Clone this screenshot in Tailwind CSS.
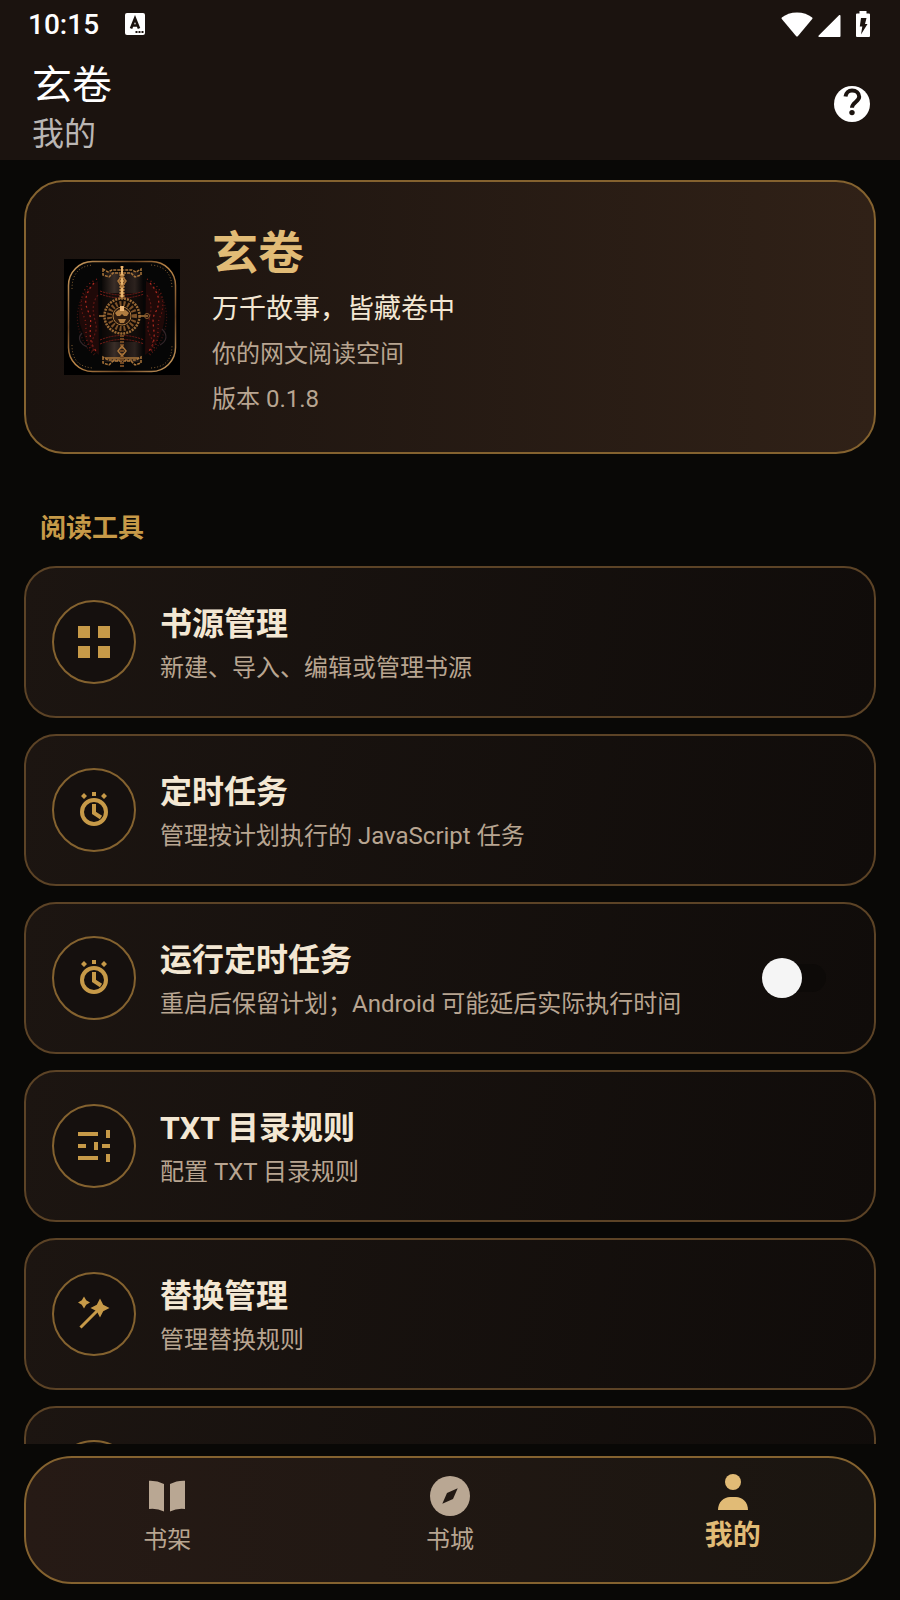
<!DOCTYPE html>
<html lang="zh-CN">
	<head>
		<meta charset="UTF-8" />
		<meta name="viewport" content="width=device-width, initial-scale=1" />
		<title>玄卷 - 我的</title>
		<script src="https://cdn.jsdelivr.net/npm/@tailwindcss/browser@4"></script>
	</head>
	<body
		class="flex h-screen flex-col bg-[#090806] font-['Roboto','Noto_Sans_CJK_SC',sans-serif] text-[#f3e7d3]"
	>
		<!-- Status bar + title -->
		<header class="shrink-0 bg-[#1b130f] text-white">
			<div class="flex h-12 items-center justify-between pr-[30px] pl-7">
				<div class="flex items-center gap-[26px]">
					<time class="pt-0.5 text-[28px] leading-8 font-medium">10:15</time>
					<svg width="20" height="22" viewBox="0 0 20 22">
						<rect width="20" height="22" rx="2" fill="#fff" />
						<path
							d="M6 15.500 10 5.500l4 10M7 12.500h6"
							fill="none"
							stroke="#1b130f"
							stroke-width="2.600"
						/>
						<path d="M10.500 18h2v2h-2zM13.500 18h2v2h-2zM16.500 18h2v2h-2z" fill="#1b130f" />
					</svg>
				</div>
				<div class="flex items-end">
					<svg width="32" height="26" viewBox="0 0 32 26" class="mr-[5px]">
						<path
							d="M16 1.500C10 1.500 4.800 3.400.800 6.500c-.5.5-.5 1 0 1.600L15 25c.6.7 1.400.7 2 0L31.200 8.100c.5-.6.5-1.100 0-1.600C27.200 3.400 22 1.500 16 1.500Z"
							fill="#fff"
						/>
					</svg>
					<svg width="23" height="26" viewBox="0 0 23 26" class="mr-[15px]">
						<path
							d="M21 4.300c.6-.6 1.500-.4 1.500.5V25c0 .6-.4 1-1 1H1.300c-1 0-1.300-.9-.6-1.500Z"
							fill="#fff"
						/>
					</svg>
					<svg width="14" height="26" viewBox="0 0 14 26">
						<path
							d="M3.500 0h7v2.500H13a1 1 0 0 1 1 1V25a1 1 0 0 1-1 1H1a1 1 0 0 1-1-1V3.500a1 1 0 0 1 1-1h2.500Z"
							fill="#fff"
						/>
						<path d="M5 7h5.500L9 13h2.500L5 23.500l1.300-8H3.800Z" fill="#1b130f" />
					</svg>
				</div>
			</div>
			<div class="flex h-28 items-center justify-between pr-[30px] pl-8">
				<div class="flex flex-col pt-3">
					<h1 class="text-[40px] leading-12">玄卷</h1>
					<p class="text-[32px] leading-12 text-[#bab6b4]">我的</p>
				</div>
				<button type="button" aria-label="帮助">
					<svg width="36" height="36" viewBox="0 0 36 36">
						<circle cx="18" cy="18" r="18" fill="#fff" />
						<path
							d="M11.500 10.500C12 7 14.500 4.500 18 4.500c4 0 7.200 2.600 7.200 6.300 0 4.700-7.200 5.700-7.200 10.900"
							fill="none"
							stroke="#1b130f"
							stroke-width="4"
						/>
						<circle cx="18" cy="26.600" r="2.700" fill="#1b130f" />
					</svg>
				</button>
			</div>
		</header>

		<main class="min-h-0 flex-1 overflow-y-auto px-6 pt-5 [scrollbar-width:none]">
			<!-- App card -->
			<section
				class="flex items-center gap-8 rounded-[40px] border-2 border-[#84622f] bg-linear-to-r from-[#1b130f] to-[#302117] px-[38px] py-[35px]"
			>
				<svg width="116" height="116" viewBox="0 0 116 116" class="shrink-0">
					<defs>
						<linearGradient id="rim" x1="0" y1="0" x2="1" y2="1">
							<stop offset="0" stop-color="#d9a866" />
							<stop offset=".3" stop-color="#6b4524" />
							<stop offset=".5" stop-color="#c08a4a" />
							<stop offset=".75" stop-color="#6b4524" />
							<stop offset="1" stop-color="#d9a866" />
						</linearGradient>
						<linearGradient id="scroll">
							<stop offset="0" stop-color="#0b0807" />
							<stop offset=".3" stop-color="#3a2e28" />
							<stop offset=".55" stop-color="#1a1311" />
							<stop offset=".8" stop-color="#2c221e" />
							<stop offset="1" stop-color="#080606" />
						</linearGradient>
					</defs>
					<rect width="116" height="116" fill="#000" />
					<rect x="4.500" y="2.500" width="107" height="110" rx="24" fill="#060606" stroke="url(#rim)" stroke-width="1.500" />
					<g fill="none" stroke="#7d5a30" stroke-dasharray="1 2">
						<path d="M8 30C8 15 15 7 29 6M87 6c14 1 21 9 21 24M8 86c0 15 7 22 21 23M87 109c14-1 21-8 21-23" />
					</g>
					<!-- red smoke -->
					<path d="M34 22C16 32 12 52 17 68s10 22 18 28zM82 22c18 10 22 30 17 46s-10 22-18 28z" fill="#5a120e" fill-opacity=".3" />
					<g fill="none" stroke-width="1.200">
						<path d="M33 20C15 28 15 48 20 58s-3 24 11 37" stroke="#8c1f18" stroke-dasharray="1 3" />
						<path d="M30 24C20 36 20 44 25 54s-4 24 7 38" stroke="#b02a20" stroke-dasharray="2 3" />
						<path d="M26 28C12 42 12 60 15 70s6 18 15 26" stroke="#4a1512" stroke-dasharray="1 2" />
						<path d="M34 36C26 46 30 56 32 66s-8 14-2 26" stroke="#5e1714" stroke-dasharray="2 2" />
						<path d="M83 20c18 8 18 28 13 38s3 24-11 37" stroke="#8c1f18" stroke-dasharray="1 3" />
						<path d="M86 24c10 12 11 20 5 30s5 24-6 38" stroke="#b02a20" stroke-dasharray="2 3" />
						<path d="M90 28c14 14 14 32 11 42s-6 18-15 26" stroke="#4a1512" stroke-dasharray="1 2" />
						<path d="M83 36c7 10 3 20 1 30s9 14 3 26" stroke="#5e1714" stroke-dasharray="2 2" />
						<path d="M98 70c6 6 5 12-2 16M18 74c-6 6 0 12 5 14" stroke="#33262a" />
					</g>
					<!-- scroll -->
					<path d="M38 13h41v90H38z" fill="url(#scroll)" />
					<path d="M38 34h41v49H38z" fill="#0b0706" fill-opacity=".75" />
					<g fill="none" stroke="#7a1c17" stroke-dasharray="2 1">
						<path d="M36 32q22 8 44 0M36 35q22 8 44 0M36 85q22-9 44 0M36 81q22-9 44 0" />
					</g>
					<g fill="none" stroke="#a8743a" stroke-width="1.500">
						<path d="M39 10v6l6 2 4-4h18l4 4 6-2v-6l-5 3-4-2H48l-4 2zM39 98v6l6 2 4-4h18l4 4 6-2v-6l-5 3h-28z" stroke-dasharray="3 1" />
						<path d="M41 99h34" />
						<path d="M58 7v101" stroke="#6e4521" stroke-width="4" stroke-dasharray="2 1" />
						<path d="M58 15v34" stroke="#c08a4a" stroke-width="5" stroke-dasharray="2 1" />
						<path d="M58 7v40" stroke="#e8b670" stroke-width="2" />
						<path d="M54 22l4-5 4 5-4 6zM54 92l4-5 4 5-4 5z" />
					</g>
					<circle cx="58" cy="57" r="17.500" fill="#120b07" stroke="#9a6a35" stroke-width="2.500" stroke-dasharray="2 1" />
					<circle cx="58" cy="57" r="12.500" fill="none" stroke="#7e5228" stroke-width="5" stroke-dasharray="2 2" />
					<circle cx="58" cy="57" r="9" fill="#2d1a0e" stroke="#b07c40" />
					<path d="M51 54q7-8 14 0l-2 3h-3l-2-2-2 2h-3zM54 60h8l-2 4h-4z" fill="#b07c40" />
					<path d="M56 47h4v5h-4z" fill="#f0b978" />
					<path d="M35 57h5M76 57h8" stroke="#a8743a" stroke-width="1.500" />
					<circle cx="83" cy="57" r="2.500" fill="none" stroke="#8a5c2c" />
				</svg>
				<div class="flex flex-col">
					<h2 class="text-[46px] leading-18 font-bold text-[#e1bb76]">玄卷</h2>
					<p class="mt-0.5 text-[27px] leading-9">万千故事，皆藏卷中</p>
					<p class="mt-[9px] text-2xl leading-9 text-[#b8a591]">你的网文阅读空间</p>
					<p class="mt-[9px] text-2xl leading-9 text-[#b8a591]">版本 0.1.8</p>
				</div>
			</section>

			<h2 class="mt-14 mb-5 px-4 text-[26px] leading-9 font-bold text-[#c79a48]">
				阅读工具
			</h2>

			<!-- Tools -->
			<ul class="flex flex-col gap-4">
				<li>
					<a
						href="#sources"
						class="flex h-38 items-center gap-6 rounded-4xl border-2 border-[#5c4326] bg-linear-[100deg] from-[#1c1511] to-[#100c0a] px-[26px]"
					>
						<span class="flex size-21 shrink-0 items-center justify-center rounded-full border-2 border-[#84622f] bg-[#15100e]">
							<svg width="32" height="32" viewBox="0 0 32 32">
								<path fill="#c79a48" d="M0 0h12v12H0zM20 0h12v12H20zM0 20h12v12H0zM20 20h12v12H20z" />
							</svg>
						</span>
						<span class="flex flex-col pt-1">
							<span class="text-[32px] leading-12 font-bold">书源管理</span>
							<span class="text-2xl leading-10 text-[#b8a591]">新建、导入、编辑或管理书源</span>
						</span>
					</a>
				</li>
				<li>
					<a
						href="#tasks"
						class="flex h-38 items-center gap-6 rounded-4xl border-2 border-[#5c4326] bg-linear-[100deg] from-[#1c1511] to-[#100c0a] px-[26px]"
					>
						<span class="flex size-21 shrink-0 items-center justify-center rounded-full border-2 border-[#84622f] bg-[#15100e]">
							<svg width="32" height="36" viewBox="0 0 32 36">
								<circle cx="16" cy="20" r="12" fill="none" stroke="#c79a48" stroke-width="4" />
								<path fill="none" stroke="#c79a48" stroke-width="4" d="M16 12v9l7 4.500" />
								<path fill="#c79a48" d="M14 0h4v4h-4zM6 1 9 4 6 7 3 4zM26 1l3 3-3 3-3-3z" />
							</svg>
						</span>
						<span class="flex flex-col pt-1">
							<span class="text-[32px] leading-12 font-bold">定时任务</span>
							<span class="text-2xl leading-10 text-[#b8a591]">管理按计划执行的 JavaScript 任务</span>
						</span>
					</a>
				</li>
				<li>
					<label
						for="run-tasks"
						class="flex h-38 items-center gap-6 rounded-4xl border-2 border-[#5c4326] bg-linear-[100deg] from-[#1c1511] to-[#100c0a] pr-12 pl-[26px]"
					>
						<span class="flex size-21 shrink-0 items-center justify-center rounded-full border-2 border-[#84622f] bg-[#15100e]">
							<svg width="32" height="36" viewBox="0 0 32 36">
								<circle cx="16" cy="20" r="12" fill="none" stroke="#c79a48" stroke-width="4" />
								<path fill="none" stroke="#c79a48" stroke-width="4" d="M16 12v9l7 4.500" />
								<path fill="#c79a48" d="M14 0h4v4h-4zM6 1 9 4 6 7 3 4zM26 1l3 3-3 3-3-3z" />
							</svg>
						</span>
						<span class="flex flex-1 flex-col pt-1">
							<span class="text-[32px] leading-12 font-bold">运行定时任务</span>
							<span class="text-2xl leading-10 text-[#b8a591]">重启后保留计划；Android 可能延后实际执行时间</span>
						</span>
						<input
							id="run-tasks"
							type="checkbox"
							class="flex h-7 w-16 shrink-0 appearance-none items-center rounded-full bg-[#0d0a08] before:size-10 before:shrink-0 before:rounded-full before:bg-[#f5f5f5] checked:justify-end checked:bg-[#84622f]"
						/>
					</label>
				</li>
				<li>
					<a
						href="#txt-rules"
						class="flex h-38 items-center gap-6 rounded-4xl border-2 border-[#5c4326] bg-linear-[100deg] from-[#1c1511] to-[#100c0a] px-[26px]"
					>
						<span class="flex size-21 shrink-0 items-center justify-center rounded-full border-2 border-[#84622f] bg-[#15100e]">
							<svg width="32" height="32" viewBox="0 0 32 32">
								<path
									fill="#c79a48"
									d="M0 2h20v4H0zM28 0h4v8h-4zM0 14h8v4H0zM16 12h4v8h-4zM24 14h8v4h-8zM0 26h20v4H0zM28 24h4v8h-4z"
								/>
							</svg>
						</span>
						<span class="flex flex-col pt-1">
							<span class="text-[32px] leading-12 font-bold">TXT 目录规则</span>
							<span class="text-2xl leading-10 text-[#b8a591]">配置 TXT 目录规则</span>
						</span>
					</a>
				</li>
				<li>
					<a
						href="#replace"
						class="flex h-38 items-center gap-6 rounded-4xl border-2 border-[#5c4326] bg-linear-[100deg] from-[#1c1511] to-[#100c0a] px-[26px]"
					>
						<span class="flex size-21 shrink-0 items-center justify-center rounded-full border-2 border-[#84622f] bg-[#15100e]">
							<svg width="32" height="32" viewBox="0 0 32 32" class="overflow-visible">
								<path
									fill="#c79a48"
									d="m6-1.500 2.200 3.800L12 4.500 8.200 6.700 6 10.500 3.800 6.700 0 4.500l3.800-2.200ZM22 .500l3.200 6.300L31.500 10l-6.300 3.200L22 19.500l-3.200-6.300L12.500 10l6.300-3.200Z"
								/>
								<path stroke="#c79a48" stroke-width="3" d="M2.500 29.500 21 11" />
							</svg>
						</span>
						<span class="flex flex-col pt-1">
							<span class="text-[32px] leading-12 font-bold">替换管理</span>
							<span class="text-2xl leading-10 text-[#b8a591]">管理替换规则</span>
						</span>
					</a>
				</li>
				<li
					class="flex h-38 items-center rounded-4xl border-2 border-[#5c4326] bg-linear-[100deg] from-[#1c1511] to-[#100c0a] px-[26px]"
				>
					<span class="size-21 rounded-full border-2 border-[#84622f] bg-[#15100e]"></span>
				</li>
			</ul>
		</main>

		<!-- Bottom tabs -->
		<nav
			class="mx-6 mt-3 mb-4 grid h-32 shrink-0 grid-cols-3 rounded-[48px] border-2 border-[#84622f] bg-linear-to-r from-[#261a15] to-[#1a1510] text-2xl text-[#b8a591]"
		>
			<a href="#shelf" class="flex flex-col items-center pt-[14px]">
				<span class="flex h-12 items-center">
					<svg width="36" height="32" viewBox="0 0 36 32" fill="#b9a793">
						<path d="M0 .700Q8 .300 15 4v27.500Q8 28 0 29ZM36 .700Q28 .300 21 4v27.500Q28 28 36 29Z" />
					</svg>
				</span>
				<span class="leading-10">书架</span>
			</a>
			<a href="#store" class="flex flex-col items-center pt-[14px]">
				<span class="flex h-12 items-center">
					<svg width="40" height="40" viewBox="0 0 40 40">
						<circle cx="20" cy="20" r="20" fill="#b9a793" />
						<path d="M27.700 12.300 23 23l-10.700 4.700L17 17Z" fill="#211813" />
					</svg>
				</span>
				<span class="leading-10">书城</span>
			</a>
			<a href="#mine" aria-current="page" class="flex flex-col items-center pt-[10px] text-[#e1bb76]">
				<span class="flex h-12 items-center">
					<svg width="32" height="36" viewBox="0 0 32 36" fill="#e1bb76">
						<circle cx="16" cy="8" r="8" />
						<path d="M1 36C1 28 7 23 13 23h6c6 0 12 5 12 13Z" />
					</svg>
				</span>
				<span class="text-[28px] leading-10 font-bold">我的</span>
			</a>
		</nav>
	</body>
</html>
